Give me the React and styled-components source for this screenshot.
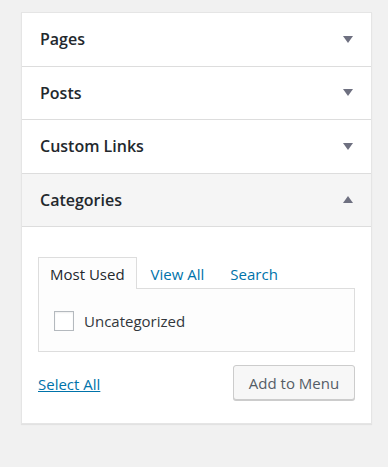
import React from "react";
import styled, { createGlobalStyle } from "styled-components";

const Global = createGlobalStyle`
  html, body { margin: 0; padding: 0; background: #f1f1f1; }
  body { font-family: "Open Sans", "Noto Sans", sans-serif; color: #23282d; }
  * { box-sizing: border-box; }
`;

const Page = styled.div`
  padding: 12px 0 0 21px;
  height: 467px;
`;

const Panel = styled.div`
  width: 351px;
  background: #fff;
  border: 1px solid #e5e5e5;
  box-shadow: 0 1px 1px rgba(0, 0, 0, 0.06);
`;

const Section = styled.div`
  border-bottom: 1px solid #dddddd;
  &:last-child { border-bottom: none; }
`;

const Header = styled.div`
  height: ${(p) => (p.$open ? "53.5px" : "52.5px")};
  display: flex;
  align-items: center;
  justify-content: space-between;
  padding: 0 18px 0 18px;
  background: ${(p) => (p.$open ? "#f5f5f5" : "#fff")};
  border-bottom: ${(p) => (p.$open ? "1px solid #dddddd" : "none")};
  font-size: 16px;
  font-weight: 600;
  color: #23282d;
`;

const Arrow = styled.svg`
  width: 10px;
  height: 7px;
  fill: #6e7080;
  transform: ${(p) => (p.$up ? "rotate(180deg)" : "none")};
`;

const Body = styled.div`
  padding: 30px 16px 22px 16px;
`;

const Tabs = styled.div`
  display: flex;
  align-items: flex-end;
  font-size: 15px;
`;

const Tab = styled.div`
  height: 32px;
  display: flex;
  align-items: center;
  padding: 0 11px;
  margin-left: ${(p) => (p.$active ? "0" : "2px")};
  color: ${(p) => (p.$active ? "#23282d" : "#0073aa")};
  background: ${(p) => (p.$active ? "#fdfdfd" : "transparent")};
  border: 1px solid ${(p) => (p.$active ? "#dddddd" : "transparent")};
  border-bottom: none;
  margin-bottom: -1px;
  position: relative;
  z-index: 1;
`;

const TabPanel = styled.div`
  border: 1px solid #dddddd;
  background: #fdfdfd;
  height: 64px;
  padding: 1px 15px 0 15px;
  display: flex;
  align-items: center;
`;

const CheckRow = styled.label`
  display: flex;
  align-items: center;
  gap: 10px;
  font-size: 15px;
  color: #32373c;
`;

const Box = styled.span`
  width: 20px;
  height: 20px;
  border: 1px solid #b4b9be;
  background: #fff;
  box-shadow: inset 0 1px 2px rgba(0, 0, 0, 0.07);
  display: inline-block;
`;

const Footer = styled.div`
  display: flex;
  align-items: center;
  justify-content: space-between;
  margin-top: 13px;
`;

const Link = styled.a`
  color: #0073aa;
  text-decoration: underline;
  font-size: 15px;
  padding-top: 2px;
`;

const Button = styled.button`
  width: 122px;
  height: 35px;
  margin-bottom: 1px;
  font-family: inherit;
  font-size: 15px;
  color: #555d66;
  background: #f7f7f7;
  border: 1px solid #cccccc;
  border-radius: 3px;
  box-shadow: 0 1px 0 #cccccc;
  padding: 0;
`;

const items = ["Pages", "Posts", "Custom Links"];

const ArrowIcon = ({ up }) => (
  <Arrow viewBox="0 0 10 7" $up={up}>
    <polygon points="0,0 10,0 5,7" />
  </Arrow>
);

export default function App() {
  return (
    <>
      <Global />
      <Page>
        <Panel>
          {items.map((t) => (
            <Section key={t}>
              <Header>
                {t}
                <ArrowIcon />
              </Header>
            </Section>
          ))}
          <Section>
            <Header $open>
              Categories
              <ArrowIcon up />
            </Header>
            <Body>
              <Tabs>
                <Tab $active>Most Used</Tab>
                <Tab>View All</Tab>
                <Tab>Search</Tab>
              </Tabs>
              <TabPanel>
                <CheckRow>
                  <Box />
                  Uncategorized
                </CheckRow>
              </TabPanel>
              <Footer>
                <Link href="#">Select All</Link>
                <Button>Add to Menu</Button>
              </Footer>
            </Body>
          </Section>
        </Panel>
      </Page>
    </>
  );
}
